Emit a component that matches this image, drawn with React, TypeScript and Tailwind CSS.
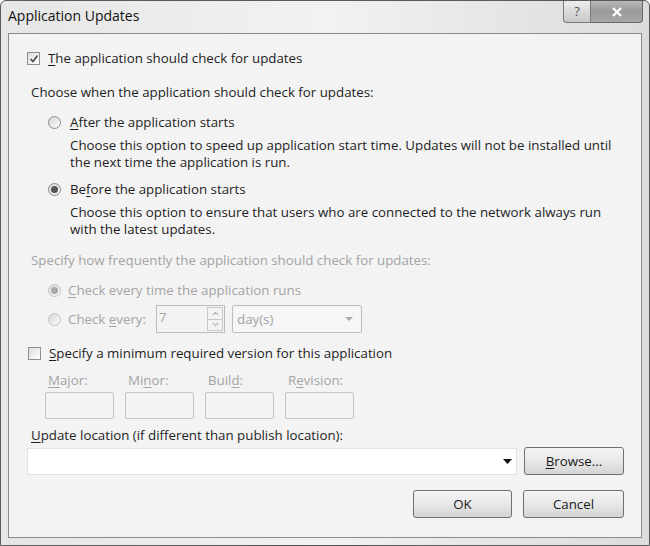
import { ChevronDown, ChevronUp } from "lucide-react";

const font = { fontFamily: '"Open Sans", "Noto Sans", sans-serif' };

function Check({ checked }: { checked?: boolean }) {
  return (
    <span className="flex h-[13px] w-[13px] shrink-0 items-center justify-center border border-[#8e8f8f] bg-gradient-to-br from-[#dcdcdc] to-[#ffffff]">
      {checked && (
        <svg width="10" height="10" viewBox="0 0 10 10">
          <path d="M1.5 5 L4 7.5 L8.5 1.5" fill="none" stroke="#4a4a4a" strokeWidth="1.6" />
        </svg>
      )}
    </span>
  );
}

function Radio({ checked, disabled }: { checked?: boolean; disabled?: boolean }) {
  return (
    <span
      className={
        "flex h-[13px] w-[13px] shrink-0 items-center justify-center rounded-full border bg-gradient-to-br from-[#d8d8d8] to-[#fafafa] " +
        (disabled ? "border-[#c4c4c4]" : "border-[#8a8a8a]")
      }
    >
      {checked && (
        <span
          className={
            "h-[7px] w-[7px] rounded-full " + (disabled ? "bg-[#a8a8a8]" : "bg-[#555555]")
          }
        />
      )}
    </span>
  );
}

function U({ children }: { children: string }) {
  return <span className="underline underline-offset-2">{children}</span>;
}

function Button({ children, className }: { children: React.ReactNode; className?: string }) {
  return (
    <div
      className={
        "flex h-[28px] shrink-0 items-center justify-center rounded-[3px] border border-[#707070] bg-gradient-to-b from-[#f4f4f4] via-[#e8e8e8] to-[#d4d4d4] text-[#1a1a1a] " +
        (className ?? "")
      }
    >
      {children}
    </div>
  );
}

export default function App() {
  return (
    <div
      style={font}
      className="h-[546px] w-[650px] overflow-hidden bg-white text-[13.3px] leading-[17px] text-[#1e1e1e]"
    >
      <div className="flex h-full w-full flex-col rounded-t-[6px] border border-[#5a5a5a] bg-gradient-to-r from-[#e6e6e6] via-[#f2f2f2] to-[#dcdcdc] px-[7px] pb-[7px]">
        {/* title bar */}
        <div className="flex h-[32px] shrink-0 items-start justify-between">
          <div className="pt-[6px] text-[14px] text-[#111]">Application Updates</div>
          <div className="-mr-[1px] flex">
            <div className="flex h-[22px] w-[28px] items-center justify-center rounded-bl-[4px] border border-t-0 border-[#7a7a7a] bg-gradient-to-b from-[#eeeeee] to-[#c8c8c8] text-[13px] text-[#555]">
              ?
            </div>
            <div className="flex h-[22px] w-[52px] items-center justify-center rounded-br-[4px] border border-l-0 border-t-0 border-[#6a6a6a] bg-gradient-to-b from-[#b8b8b8] via-[#9a9a9a] to-[#a8a8a8]">
              <svg width="12" height="10" viewBox="0 0 12 10">
                <path d="M2 1 L10 9 M10 1 L2 9" stroke="#ffffff" strokeWidth="2.4" />
              </svg>
            </div>
          </div>
        </div>

        {/* content panel */}
        <div className="flex flex-1 flex-col border border-[#8a8a8a] bg-[#f3f3f3] pl-[18px] pr-[17px]">
          <div className="mt-[16px] flex items-center gap-[8px]">
            <Check checked />
            <span>
              <U>T</U>he application should check for updates
            </span>
          </div>

          <div className="ml-[4px] mt-[17px]">Choose when the application should check for updates:</div>

          <div className="ml-[21px] mt-[13px] flex items-center gap-[9px]">
            <Radio />
            <span>
              <U>A</U>fter the application starts
            </span>
          </div>
          <div className="ml-[43px] mt-[6px]">
            Choose this option to speed up application start time. Updates will not be installed until
            <br />
            the next time the application is run.
          </div>

          <div className="ml-[21px] mt-[10px] flex items-center gap-[9px]">
            <Radio checked />
            <span>
              Be<U>f</U>ore the application starts
            </span>
          </div>
          <div className="ml-[43px] mt-[6px]">
            Choose this option to ensure that users who are connected to the network always run
            <br />
            with the latest updates.
          </div>

          <div className="ml-[4px] mt-[14px] text-[#a4a4a4]">
            Specify how frequently the application should check for updates:
          </div>

          <div className="ml-[21px] mt-[13px] flex items-center gap-[7px] text-[#a4a4a4]">
            <Radio checked disabled />
            <span>
              <U>C</U>heck every time the application runs
            </span>
          </div>

          <div className="ml-[21px] mt-[6px] flex items-center text-[#a4a4a4]">
            <Radio disabled />
            <span className="ml-[7px] w-[88px] shrink-0">
              Check <U>e</U>very:
            </span>
            <div className="flex h-[28px] w-[69px] shrink-0 items-stretch border border-[#bcbcbc] bg-[#f3f3f3]">
              <span className="flex-1 pl-[2px] leading-[22px]">7</span>
              <div className="my-[1px] mr-[1px] flex w-[16px] flex-col border border-[#c8c8c8]">
                <span className="flex flex-1 items-center justify-center border-b border-[#c8c8c8]">
                  <ChevronUp size={9} strokeWidth={3} color="#b0b0b0" />
                </span>
                <span className="flex flex-1 items-center justify-center">
                  <ChevronDown size={9} strokeWidth={3} color="#b0b0b0" />
                </span>
              </div>
            </div>
            <div className="ml-[7px] flex h-[28px] w-[130px] shrink-0 items-center justify-between rounded-[2px] border border-[#bcbcbc] bg-[#f6f6f6] pl-[4px] pr-[8px]">
              <span>day(s)</span>
              <svg width="8" height="5" viewBox="0 0 8 5">
                <path d="M0 0 L8 0 L4 4 Z" fill="#a8a8a8" />
              </svg>
            </div>
          </div>

          <div className="ml-[1px] mt-[12px] flex items-center gap-[8px]">
            <Check />
            <span>
              <U>S</U>pecify a minimum required version for this application
            </span>
          </div>

          <div className="ml-[18px] mt-[10px] flex gap-[11px] text-[#a4a4a4]">
            {[
              ["M", "ajor:"],
              ["Mi", "n", "or:"],
              ["Buil", "d", ":"],
              ["R", "e", "vision:"],
            ].map((p, i) => (
              <div key={i} className="flex flex-col gap-[3px]">
                <span className="pl-[3px]">
                  {p.length === 2 ? (
                    <>
                      <U>{p[0]}</U>
                      {p[1]}
                    </>
                  ) : (
                    <>
                      {p[0]}
                      <U>{p[1]}</U>
                      {p[2]}
                    </>
                  )}
                </span>
                <div className="h-[27px] w-[69px] rounded-[2px] border border-[#c4c4c4] bg-[#f3f3f3]" />
              </div>
            ))}
          </div>

          <div className="ml-[4px] mt-[8px]">
            <U>U</U>pdate location (if different than publish location):
          </div>

          <div className="mt-[3px] flex items-center">
            <div className="flex h-[27px] w-[490px] shrink-0 items-center justify-end border border-[#e2e2e2] bg-white pr-[4px]">
              <svg width="9" height="5" viewBox="0 0 9 5">
                <path d="M0 0 L9 0 L4.5 5 Z" fill="#111" />
              </svg>
            </div>
            <Button className="ml-[7px] w-[100px]">
              <span>
                <U>B</U>rowse...
              </span>
            </Button>
          </div>

          <div className="mt-[15px] flex justify-end gap-[11px]">
            <Button className="w-[99px]">OK</Button>
            <Button className="w-[101px]">Cancel</Button>
          </div>
        </div>
      </div>
    </div>
  );
}
